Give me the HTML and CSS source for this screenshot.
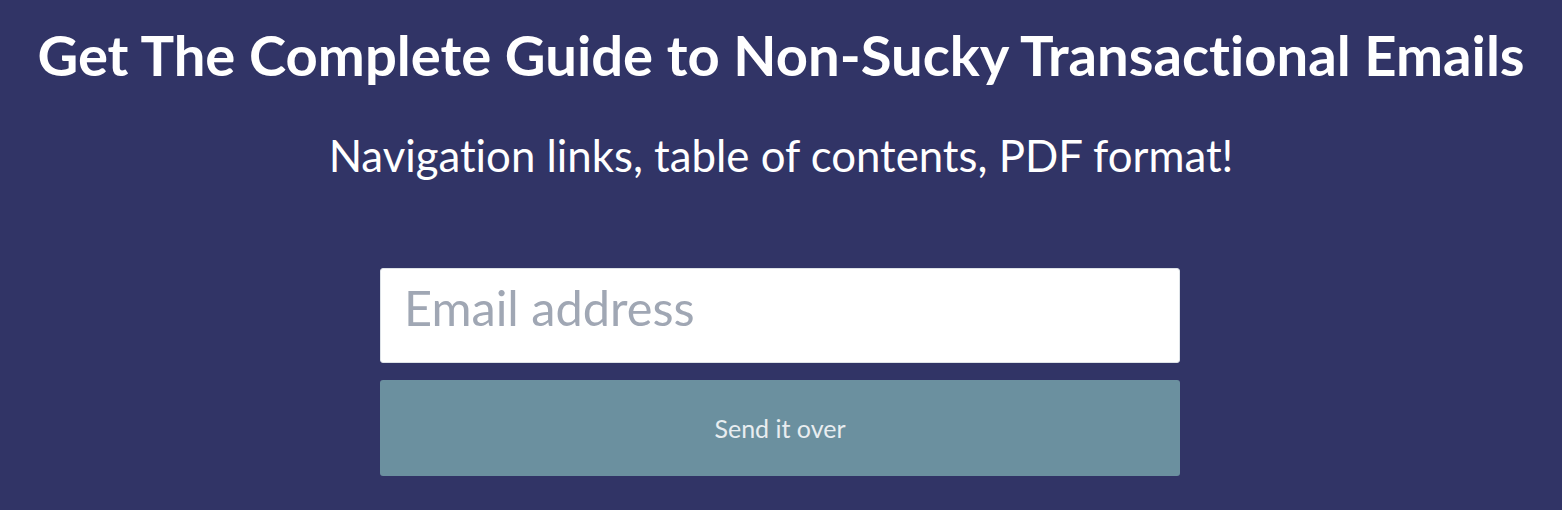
FILE: index.html
```html
<!DOCTYPE html>
<html lang="en">
<head>
  <meta charset="UTF-8">
  <title>Transactional Emails Guide</title>
  <link rel="stylesheet" href="styles.css">
</head>
<body>

  <section class="guia">
    <h1>Get The Complete Guide to Non-Sucky Transactional Emails</h1>
    <p class="sub">Navigation links, table of contents, PDF format!</p>

    <form class="form">
      <input type="email" placeholder="Email address" />
      <button type="button">Send it over</button>
    </form>
  </section>

</body>
</html>
```

FILE: styles.css
```css
* {
  box-sizing: border-box;
}

body {
  margin: 0;
  padding: 0;
  font-family: Lato, 'Open Sans', sans-serif;
  font-variant-ligatures: none;
  background: #313466;
  color: white;
}

.guia {
  display: flex;
  flex-direction: column;
  align-items: center;
  padding-top: 21px;
}

h1 {
  margin: 0;
  font-size: 56.2px;
  font-weight: bold;
  line-height: 68px;
}

.sub {
  margin: 40px 0 0;
  font-size: 43.75px;
  line-height: 53px;
}

.form {
  display: flex;
  flex-direction: column;
  gap: 17px;
  width: 800px;
  margin-top: 86px;
  margin-right: 2px;
}

input {
  height: 95px;
  padding: 8px 23px 26px;
  font-family: inherit;
  font-variant-ligatures: none;
  font-size: 48.7px;
  color: #333;
  background: white;
  border: 1px solid #dde2e7;
  border-radius: 3px;
}

input::placeholder {
  color: #a0a7b4;
}

button {
  height: 96px;
  font-family: inherit;
  font-size: 25px;
  color: #e8edf0;
  background: #6b909f;
  border: none;
  border-radius: 3px;
}
```
